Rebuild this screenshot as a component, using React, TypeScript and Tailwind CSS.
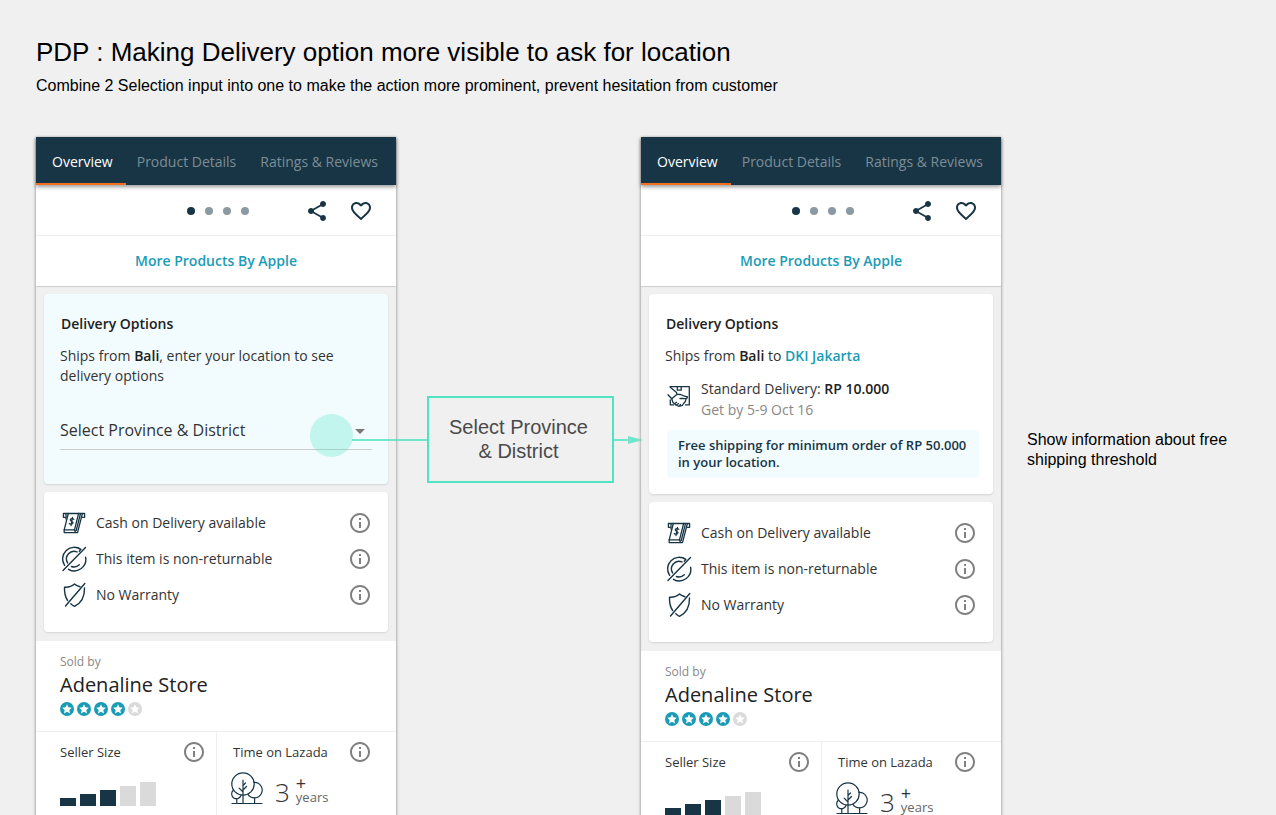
import type { ReactNode } from 'react';
import { MdFavoriteBorder, MdInfoOutline, MdShare } from 'react-icons/md';

interface PhoneProps {
  id: string;
  children: ReactNode;
}

const tabs = ['Overview', 'Product Details', 'Ratings & Reviews'];

const sizeBars = [
  { height: 'h-2', filled: true },
  { height: 'h-3', filled: true },
  { height: 'h-4', filled: true },
  { height: 'h-5', filled: false },
  { height: 'h-6', filled: false }
];

function CashIcon() {
  return (
    <svg viewBox="0 0 28 28" className="h-7 w-7" fill="none" stroke="#183545" strokeWidth="1.3" strokeLinejoin="round" strokeLinecap="round">
      <path d="M5.500 8.300H3.400V4.500H24.600V8.300H22.500" />
      <path d="M8.300 4.500L4.200 20.800H14.500L18.600 4.500" />
      <path d="M4.200 20.800V23.600H17.500L22.300 5M14.500 20.800L15.500 23.400M16.200 21.500L20.400 5" />
      <path d="M6 5V10" />
      <path d="M13.900 10.300C12.900 9.200 10.400 9.300 10.200 10.900C10 12.500 13.300 12.200 13 14C12.700 15.600 10.400 15.500 9.300 14.500M12.500 8.300L11 16.600" strokeWidth="1.2" />
    </svg>
  );
}

function NoReturnIcon() {
  return (
    <svg viewBox="0 0 28 28" className="h-7 w-7" fill="none" stroke="#183545" strokeWidth="1.4" strokeLinecap="round" strokeLinejoin="round">
      <path d="M3 25.500L25.500 2.500" />
      <path d="M4.600 20.300A11.500 11.500 0 0 1 20.700 4.400M18.200 2.800L20.900 4.400L19.300 6.200" />
      <path d="M25.600 12.300A11.500 11.500 0 0 1 8.500 24.300" />
      <path d="M7.600 17.900A7.600 7.600 0 0 1 17 6.900" />
      <path d="M19.300 19.800A7.600 7.600 0 0 1 11.400 21.500" />
    </svg>
  );
}

function NoWarrantyIcon() {
  return (
    <svg viewBox="0 0 28 28" className="h-7 w-7" fill="none" stroke="#183545" strokeWidth="1.4" strokeLinecap="round" strokeLinejoin="round">
      <path d="M5.500 25L24.800 2.500" />
      <path d="M7.600 19.500C5 15.500 4.300 11 4.500 6.200C8.500 6.500 12 5.300 14.500 3C16.200 4.600 18.300 5.400 20 5.700" />
      <path d="M24.500 7C24.700 15 21.500 22 14.500 25.300C13 24.700 11.800 23.800 10.800 22.800" />
    </svg>
  );
}

function HandoverIcon() {
  return (
    <svg viewBox="0 0 28 28" className="h-7 w-7" fill="none" stroke="#183545" strokeWidth="1.3" strokeLinecap="round" strokeLinejoin="round">
      <path d="M5 4.700H24.300V22.900H20.500M8.500 22.900H5.300V18" />
      <path d="M12.300 4.700V8.200H16.200V4.700" />
      <path d="M5.300 5.200L11.500 10.500L12 12.300L6.800 16.800L3 12.800" />
      <path d="M12 12.300L15.500 12.500L19.500 14.200L22.500 15C22.600 17 19.500 16.800 18 16.500L15 16.500" />
      <path d="M6.800 17L8 20.500L9.500 21.800L11.500 20.300M9.500 21.800L11 23.200L13.500 21.500M12 23.500L14 24.300L15.500 22.500M15.500 24L17.500 23.300L18.500 21.500L20 20L21 17.200" />
    </svg>
  );
}

function TreesIcon() {
  return (
    <svg viewBox="0 0 32 33" className="h-[33px] w-8" fill="none" stroke="#183545" strokeWidth="1.2" strokeLinecap="round">
      <circle cx="12" cy="12" r="11.200" />
      <path d="M23.200 10.400A7.700 7.700 0 1 1 17 22.300" />
      <path d="M2.300 18.300A4.800 4.800 0 1 0 10 23.500" />
      <path d="M12 8V31.500M12 20L8.200 16.200M12 18L15.500 14.500M12 13.500L14.500 11M5.800 27V31.500M23.600 26V31.500M1 31.500H31" />
    </svg>
  );
}

function RatingStar({ filled }: { filled: boolean }) {
  return (
    <svg viewBox="0 0 14 14" className="h-3.5 w-3.5" aria-hidden="true">
      <circle cx="7" cy="7" r="7" fill={filled ? '#1a9cb7' : '#dadada'} />
      <path
        d="M7 2.200L8.400 5.300L11.800 5.700L9.300 8L10 11.400L7 9.700L4 11.400L4.700 8L2.200 5.700L5.600 5.300Z"
        fill="#fff"
      />
    </svg>
  );
}

function InfoButton({ label }: { label: string }) {
  return (
    <button type="button" aria-label={label} className="text-[#808080]">
      <MdInfoOutline className="h-6 w-6" />
    </button>
  );
}

const benefits = [
  { label: 'Cash on Delivery available', Icon: CashIcon },
  { label: 'This item is non-returnable', Icon: NoReturnIcon },
  { label: 'No Warranty', Icon: NoWarrantyIcon }
];

function Card({ className, children }: { className: string; children: ReactNode }) {
  return (
    <section className={`rounded px-4 shadow-[0_1px_2px_rgba(0,0,0,0.12)] ${className}`}>
      {children}
    </section>
  );
}

function Phone({ id, children }: PhoneProps) {
  return (
    <article className="w-[360px] shrink-0 self-stretch bg-white font-['Open_Sans',sans-serif] text-sm/5 text-[#333333] shadow-[0_1px_3px_rgba(0,0,0,0.5)]">
      <nav className="flex h-12 bg-[#183545] shadow-[0_2px_4px_rgba(0,0,0,0.4)]">
        {tabs.map((tab, index) => (
          <button
            key={tab}
            type="button"
            className={
              index === 0
                ? 'border-b-2 border-[#f36f21] pt-1 pr-[13px] pl-4 text-white'
                : 'pt-0.5 pr-[13px] pl-[11px] text-[#7c8d96]'
            }
          >
            {tab}
          </button>
        ))}
      </nav>

      <div className="grid h-[51px] grid-cols-[1fr_auto_1fr] items-center border-b border-[#efefef] pt-0.5 text-[#183545]">
        <div className="col-start-2 flex gap-2.5 pl-1">
          <span className="h-2 w-2 rounded-full bg-[#183545]" />
          <span className="h-2 w-2 rounded-full bg-[#8b9aa2]" />
          <span className="h-2 w-2 rounded-full bg-[#8b9aa2]" />
          <span className="h-2 w-2 rounded-full bg-[#8b9aa2]" />
        </div>
        <div className="flex justify-end gap-5 pr-[23px]">
          <button type="button" aria-label="Share">
            <MdShare className="h-6 w-6" />
          </button>
          <button type="button" aria-label="Add to wishlist">
            <MdFavoriteBorder className="h-6 w-6" />
          </button>
        </div>
      </div>

      <div className="flex h-[50px] items-center justify-center">
        <a href="#apple" className="font-semibold text-[#1a9cb7]">
          More Products By Apple
        </a>
      </div>

      <div className="flex flex-col gap-2 bg-[#f0f0f0] px-2 pt-2 pb-[9px] shadow-[inset_0_1px_1px_rgba(0,0,0,0.15)]">
        {children}

        <Card className="bg-white pt-[13px] pb-[19px]">
          <ul>
            {benefits.map(({ label, Icon }) => (
              <li key={label} className="flex h-9 items-center gap-2">
                <Icon />
                <span className="flex-1">{label}</span>
                <InfoButton label={`About: ${label}`} />
              </li>
            ))}
          </ul>
        </Card>
      </div>

      <section className="border-b border-[#efefef] px-6 pt-3 pb-[15px]">
        <p className="text-xs/[18px] text-[#888888]">Sold by</p>
        <h3 className="text-xl/7 text-[#212121]">Adenaline Store</h3>
        <div className="mt-[3px] flex gap-[3px]" role="img" aria-label="4 out of 5">
          {[1, 2, 3, 4, 5].map((star) => (
            <RatingStar key={star} filled={star < 5} />
          ))}
        </div>
      </section>

      <section className="grid grid-cols-2 pb-10">
        <div className="pt-2 pr-2.5 pb-4 pl-6">
          <div className="flex h-6 items-center justify-between">
            <h4 className="text-[13px]/5">Seller Size</h4>
            <InfoButton label="About seller size" />
          </div>
          <div className="flex h-[42px] items-end gap-1">
            {sizeBars.map((bar) => (
              <span
                key={`${id}-${bar.height}`}
                className={`w-4 ${bar.height} ${bar.filled ? 'bg-[#183545]' : 'bg-[#dadada]'}`}
              />
            ))}
          </div>
        </div>
        <div className="border-l border-[#efefef] pt-2 pr-6 pb-4 pl-4">
          <div className="flex h-6 items-center justify-between">
            <h4 className="text-[13px]/5">Time on Lazada</h4>
            <InfoButton label="About time on Lazada" />
          </div>
          <div className="-ml-0.5 flex h-[41px] items-end">
            <TreesIcon />
            <span className="ml-3 text-[26px]/[26px] font-light">3</span>
            <span className="ml-1.5 flex flex-col">
              <span className="text-lg/3">+</span>
              <span className="text-[13px]/4 text-[#666666]">years</span>
            </span>
          </div>
        </div>
      </section>
    </article>
  );
}

function LocationPrompt() {
  return (
    <Card className="bg-[#f2fcff] pt-5 pb-[34px]">
      <h2 className="pl-px font-semibold text-[#212121]">Delivery Options</h2>
      <p className="mt-3">
        Ships from <strong className="font-semibold text-[#212121]">Bali</strong>, enter your location to see
        delivery options
      </p>
      <div className="relative mt-[26px]">
        <select
          aria-label="Select Province & District"
          className="h-[38px] w-full appearance-none border-b border-[#cccccc] bg-transparent pb-0.5 text-base text-[#333333]"
        >
          <option>Select Province &amp; District</option>
        </select>
        <svg viewBox="0 0 10 5" className="pointer-events-none absolute top-[17px] right-[7px] h-[5px] w-2.5">
          <path d="M0 0H10L5 5Z" fill="#777777" />
        </svg>
        {/* tap hotspot */}
        <span className="pointer-events-none absolute top-0.5 right-[19px] h-[43px] w-[43px] rounded-full bg-[#50e3c2]/30" />
      </div>
    </Card>
  );
}

function DeliveryQuote() {
  return (
    <Card className="bg-white pt-5 pb-4">
      <h2 className="pl-px font-semibold text-[#212121]">Delivery Options</h2>
      <p className="mt-3">
        Ships from <strong className="font-semibold text-[#212121]">Bali</strong> to{' '}
        <a href="#location" className="font-semibold text-[#1a9cb7]">
          DKI Jakarta
        </a>
      </p>
      <div className="mt-3 flex items-start gap-2">
        <div className="pt-1">
          <HandoverIcon />
        </div>
        <div className="leading-[21px]">
          <p>
            Standard Delivery: <strong className="font-semibold text-[#212121]">RP 10.000</strong>
          </p>
          <p className="text-[#888888]">Get by 5-9 Oct 16</p>
        </div>
      </div>
      <p className="mt-2.5 -mr-0.5 ml-0.5 rounded-sm bg-[#f2fcff] py-[7px] pr-2 pl-[11px] text-[13px]/[17px] font-semibold text-[#183545]">
        Free shipping for minimum order of RP 50.000 in your location.
      </p>
    </Card>
  );
}

export default function App() {
  return (
    <main className="flex h-screen flex-col overflow-hidden bg-[#f0f0f0] pt-9 pl-9 font-['Liberation_Sans',Arial,sans-serif] text-black">
      <header>
        <h1 className="text-[26px]/8">PDP : Making Delivery option more visible to ask for location</h1>
        <p className="mt-2 text-base/5">
          Combine 2 Selection input into one to make the action more prominent, prevent hesitation from customer
        </p>
      </header>

      <div className="mt-[41px] flex flex-1 items-start">
        <Phone id="before">
          <LocationPrompt />
        </Phone>

        <div className="z-10 mt-[259px] flex w-[245px] shrink-0 items-center">
          <span className="-ml-11 h-0.5 w-[75px] shrink-0 bg-[#50e3c2]/80" />
          <p className="flex h-[87px] flex-1 items-center justify-center border-2 border-[#50e3c2] pr-5 pb-0.5 pl-4 text-center text-xl/6 text-[#4a4a4a]">
            Select Province &amp; District
          </p>
          <svg viewBox="0 0 29 10" className="-mr-0.5 h-2.5 w-[29px] shrink-0" fill="#50e3c2" fillOpacity="0.800">
            <path d="M0 4H14V6H0ZM14 1L29 5L14 9Z" />
          </svg>
        </div>

        <Phone id="after">
          <DeliveryQuote />
        </Phone>

        <p className="mt-[293px] flex-1 pr-8 pl-[26px] text-base/5">
          Show information about free shipping threshold
        </p>
      </div>
    </main>
  );
}
